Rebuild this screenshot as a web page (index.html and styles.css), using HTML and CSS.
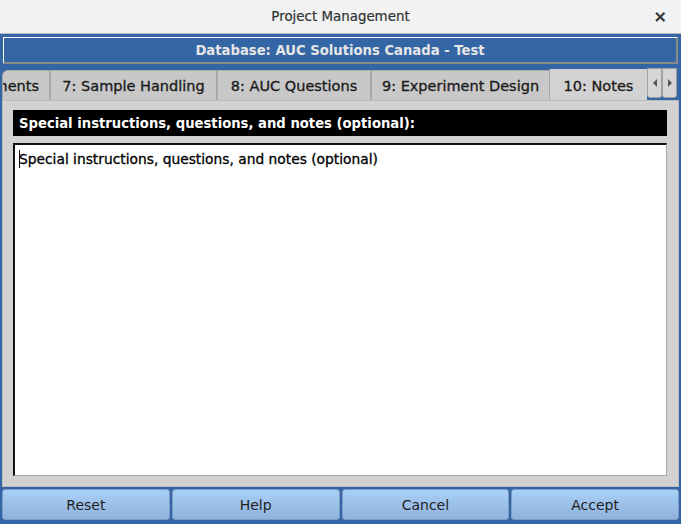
FILE: index.html
```html
<!DOCTYPE html>
<html>
<head>
<meta charset="utf-8">
<link rel="stylesheet" href="styles.css">
</head>
<body>
<div class="titlebar">
  <span class="title">Project Management</span>
  <span class="close">×</span>
</div>
<div class="window">
  <div class="dbbar">Database: AUC Solutions Canada - Test</div>
  <div class="tabs">
    <div class="tab first">ments</div>
    <div class="tab w7">7: Sample Handling</div>
    <div class="tab w8">8: AUC Questions</div>
    <div class="tab w9">9: Experiment Design</div>
    <div class="tab active">10: Notes</div>
    <div class="arrows">
      <div class="arrow"><svg width="6" height="8" viewBox="0 0 6 8"><path d="M5 0 L1 4 L5 8 Z" fill="#555"/></svg></div>
      <div class="arrow"><svg width="6" height="8" viewBox="0 0 6 8"><path d="M1 0 L5 4 L1 8 Z" fill="#555"/></svg></div>
    </div>
  </div>
  <div class="panel">
    <div class="label">Special instructions, questions, and notes (optional):</div>
    <div class="editor"><span class="caret"></span>Special instructions, questions, and notes (optional)</div>
  </div>
  <div class="buttons">
    <div class="btn">Reset</div>
    <div class="btn">Help</div>
    <div class="btn">Cancel</div>
    <div class="btn">Accept</div>
  </div>
</div>
</body>
</html>
```
FILE: styles.css
```css
html, body {
  margin: 0;
  padding: 0;
  width: 681px;
  height: 524px;
  overflow: hidden;
  font-family: "DejaVu Sans", sans-serif;
  background: #3465a4;
}
.titlebar {
  height: 33px;
  background: #f2f2f2;
  border-bottom: 1px solid #b8b8b8;
  display: flex;
  align-items: center;
  justify-content: center;
  position: relative;
  color: #2e3436;
  font-size: 13.4px;
  -webkit-text-stroke: 0.2px #2e3436;
}
.close {
  position: absolute;
  right: 14px;
  top: 7px;
  font-size: 16px;
  font-weight: bold;
}
.window {
  padding: 2px 2px 0 2px;
  display: flex;
  flex-direction: column;
}
.dbbar {
  height: 24px;
  margin: 1px 1px 0 1px;
  border-top: 1px solid #ffffff;
  border-left: 1px solid #ffffff;
  border-right: 2px solid #8a8a8a;
  border-bottom: 2px solid #8a8a8a;
  background: #3465a4;
  color: #e6e6e6;
  font-weight: bold;
  font-size: 13.2px;
  display: flex;
  align-items: center;
  justify-content: center;
}
.tabs {
  margin-top: 4px;
  height: 32px;
  display: flex;
  align-items: flex-end;
  overflow: hidden;
  position: relative;
  z-index: 1;
}
.tab {
  height: 30px;
  box-sizing: border-box;
  background: #c8c8c8;
  border: 1px solid #a8a8a8;
  border-bottom: none;
  display: flex;
  align-items: center;
  justify-content: center;
  font-size: 14.5px;
  color: #1a1a1a;
  -webkit-text-stroke: 0.3px #1a1a1a;
  white-space: nowrap;
  flex: none;
  overflow: hidden;
}
.w7 { width: 167px; }
.w8 { width: 154px; }
.w9 { width: 179px; }
.tab.first {
  width: 48px;
  justify-content: flex-end;
  padding: 0 10px 0 0;
  border-radius: 6px 0 0 0;
}
.tab.active {
  height: 32px;
  background: #d2d2d2;
  border-color: #d2d2d2;
  width: 97px;
  margin-bottom: -1px;
}
.arrows {
  display: flex;
  height: 32px;
  align-self: flex-start;
}
.arrow {
  width: 15px;
  height: 30px;
  box-sizing: border-box;
  background: #d6d6d6;
  border: 1px solid #a0a0a0;
  border-radius: 0 0 3px 3px;
  display: flex;
  align-items: center;
  justify-content: center;
}
.panel {
  height: 376px;
  background: #d2d2d2;
  border: 1px solid #bdbdbd;
  padding: 9px 11px 0 10px;
  display: flex;
  flex-direction: column;
}
.label {
  height: 26px;
  background: #000;
  color: #fff;
  font-weight: bold;
  font-size: 13.2px;
  display: flex;
  align-items: center;
  padding-left: 6px;
}
.editor {
  margin-top: 7px;
  height: 333px;
  box-sizing: border-box;
  background: #fff;
  border-top: 2px solid #111;
  border-left: 2px solid #111;
  border-right: 1px solid #a8a8a8;
  border-bottom: 1px solid #a8a8a8;
  padding: 5px 4px;
  font-size: 13.8px;
  color: #000;
  -webkit-text-stroke: 0.3px #000;
  position: relative;
}
.caret {
  display: inline-block;
  width: 1px;
  height: 18px;
  background: #000;
  vertical-align: -4px;
  margin-right: -1px;
}
.buttons {
  margin-top: 2px;
  display: grid;
  grid-template-columns: repeat(4, 1fr);
  gap: 2px;
}
.btn {
  height: 31px;
  box-sizing: border-box;
  border: 1px solid #7f9cc4;
  border-radius: 3px;
  background: linear-gradient(#aad0f7, #8fb2dc);
  display: flex;
  align-items: center;
  justify-content: center;
  font-size: 14px;
  color: #1e1e1e;
}
```
